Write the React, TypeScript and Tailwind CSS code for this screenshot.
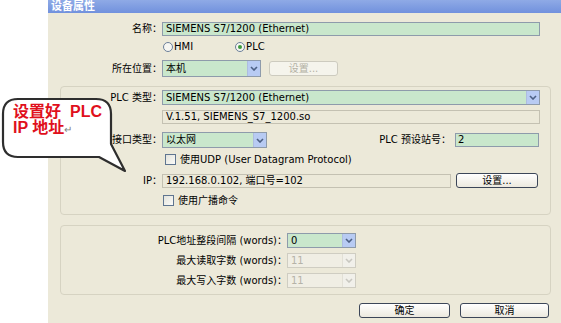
import React from 'react';

const font = { fontFamily: '"DejaVu Sans", "Noto Sans CJK SC", sans-serif' };

const Chevron: React.FC<{ disabled?: boolean }> = ({ disabled }) => (
  <svg width="8" height="5" viewBox="0 0 8 5">
    <path
      d="M1 1 L4 4 L7 1"
      fill="none"
      stroke={disabled ? '#c8c7c0' : '#4d6185'}
      strokeWidth="1.6"
    />
  </svg>
);

interface SelectProps {
  value: string;
  width: string;
  height?: string;
  disabled?: boolean;
}

const Select: React.FC<SelectProps> = ({ value, width, height = 'h-[15px]', disabled }) => (
  <div
    className={`flex ${width} ${height} border ${
      disabled ? 'border-[#cfcdc2] bg-[#f0eee4]' : 'border-[#8e9bab] bg-[#c9e7cc]'
    }`}
  >
    <div
      className={`flex-1 pl-[3px] text-[10px] leading-none flex items-center ${
        disabled ? 'text-[#b5b3a8]' : 'text-black'
      }`}
    >
      {value}
    </div>
    <div
      className={`w-[13px] flex items-center justify-center ${
        disabled ? 'bg-[#f1f0ea] border-l border-[#e2e0d6]' : 'bg-[#b8cbf3] border-l border-[#aebde0]'
      }`}
    >
      <Chevron disabled={disabled} />
    </div>
  </div>
);

const Button: React.FC<{ label: string; width: string; disabled?: boolean }> = ({ label, width, disabled }) => (
  <div
    className={`${width} h-[15px] rounded-[3px] border flex items-center justify-center text-[10px] leading-none ${
      disabled
        ? 'border-[#cdcbbf] bg-[#f5f4ec] text-[#b3b1a4]'
        : 'border-[#3c4658] bg-gradient-to-b from-[#ffffff] to-[#ece9de] text-black'
    }`}
  >
    {label}
  </div>
);

const Checkbox: React.FC<{ label: string; className?: string }> = ({ label, className = '' }) => (
  <div className={`flex items-center h-[11px] ${className}`}>
    <div className="w-[11px] h-[11px] border border-[#5f7590] bg-gradient-to-br from-[#e3e3dc] to-[#fbfbf8]" />
    <span className="ml-[4px] text-[10px] leading-none">{label}</span>
  </div>
);

const Radio: React.FC<{ label: string; checked?: boolean; className?: string }> = ({ label, checked, className = '' }) => (
  <div className={`flex items-center ${className}`}>
    <div className="w-[10px] h-[10px] rounded-full border border-[#6b7f99] bg-[#f6f6f2] flex items-center justify-center">
      {checked && <div className="w-[4px] h-[4px] rounded-full bg-[#3d9a3d]" />}
    </div>
    <span className="ml-[1px] text-[10px] leading-none">{label}</span>
  </div>
);

// speech bubble over the left edge of the dialog
const Callout: React.FC = () => (
  <div className="absolute left-0 top-[96px] w-[130px] h-[80px]">
    <svg width="130" height="80" viewBox="0 0 130 80" className="absolute left-0 top-0">
      <path
        d="M18 3 H96 Q111 3 111 18 V48 L125 75 L99 61 H18 Q3 61 3 46 V18 Q3 3 18 3 Z"
        fill="#ffffff"
        stroke="#2e2e2e"
        strokeWidth="2.2"
        strokeLinejoin="round"
      />
    </svg>
    <div
      className="absolute left-[13px] top-[8px] text-[16px] leading-[16px] font-bold text-[#e0101c]"
      style={{ fontFamily: '"Liberation Sans", "Noto Sans CJK SC", sans-serif' }}
    >
      <div className="h-[16px]">
        设置好<span className="ml-[9px]">PLC</span>
      </div>
      <div className="h-[16px]">
        IP 地址<span className="text-[10px] font-normal text-[#808080]">↵</span>
      </div>
    </div>
  </div>
);

export default function App() {
  return (
    <div className="relative w-[561px] h-[323px] bg-white flex overflow-hidden" style={font}>
      <div className="w-[48px] shrink-0" />
      <div className="flex-1 flex flex-col bg-[#ece9d9] text-black">
        <div className="h-[13px] bg-gradient-to-b from-[#8faae6] to-[#7191dd] flex items-center pl-[3px]">
          <span className="text-[11px] leading-none font-bold text-white">设备属性</span>
        </div>

        <div className="flex items-center mt-[9px] h-[14px]">
          <div className="w-[114px] text-right text-[10px] leading-none">名称：</div>
          <div className="w-[378px] h-[14px] border border-[#8e9bab] bg-[#c9e7cc] pl-[3px] text-[10px] leading-none flex items-center">
            SIEMENS S7/1200 (Ethernet)
          </div>
        </div>

        <div className="flex items-center mt-[5px] h-[11px] pl-[115px]">
          <Radio label="HMI" />
          <Radio label="PLC" checked className="ml-[42px]" />
        </div>

        <div className="flex items-center mt-[8px] h-[17px]">
          <div className="w-[114px] text-right text-[10px] leading-none">所在位置：</div>
          <Select value="本机" width="w-[99px]" height="h-[17px]" />
          <div className="ml-[8px]">
            <Button label="设置..." width="w-[69px]" disabled />
          </div>
        </div>

        <div className="mt-[9px] ml-[12px] mr-[10px] h-[129px] border border-[#d6d3c2] rounded-[4px] flex flex-col">
          <div className="flex items-center mt-[3px] h-[15px]">
            <div className="w-[101px] text-right text-[10px] leading-none">PLC 类型：</div>
            <Select value="SIEMENS S7/1200 (Ethernet)" width="w-[378px]" />
          </div>
          <div className="flex items-center mt-[5px] h-[14px]">
            <div className="w-[101px]" />
            <div className="w-[378px] h-[14px] border border-[#c4c1b2] pl-[3px] text-[10px] leading-none flex items-center">
              V.1.51, SIEMENS_S7_1200.so
            </div>
          </div>
          <div className="flex items-center mt-[8px] h-[16px]">
            <div className="w-[101px] text-right text-[10px] leading-none">接口类型：</div>
            <Select value="以太网" width="w-[105px]" height="h-[16px]" />
            <div className="flex-1 text-right text-[10px] leading-none">PLC 预设站号：</div>
            <div className="ml-[4px] mr-[11px] w-[84px] h-[14px] border border-[#8e9bab] bg-[#c9e7cc] pl-[2px] text-[10px] leading-none flex items-center">
              2
            </div>
          </div>
          <Checkbox label="使用UDP (User Datagram Protocol)" className="mt-[6px] ml-[104px]" />
          <div className="flex items-center mt-[8px] h-[15px]">
            <div className="w-[101px] text-right text-[10px] leading-none">IP：</div>
            <div className="w-[289px] h-[14px] border border-[#c4c1b2] pl-[3px] text-[10px] leading-none flex items-center">
              192.168.0.102, 端口号=102
            </div>
            <div className="ml-[5px]">
              <Button label="设置..." width="w-[82px]" />
            </div>
          </div>
          <Checkbox label="使用广播命令" className="mt-[7px] ml-[102px]" />
        </div>

        <div className="mt-[10px] ml-[12px] mr-[10px] h-[70px] border border-[#d6d3c2] rounded-[4px] flex flex-col">
          {[
            { label: 'PLC地址整段间隔 (words)：', value: '0', disabled: false, mt: 'mt-[7px]' },
            { label: '最大读取字数 (words)：', value: '11', disabled: true, mt: 'mt-[5px]' },
            { label: '最大写入字数 (words)：', value: '11', disabled: true, mt: 'mt-[5px]' },
          ].map((row) => (
            <div key={row.label} className={`flex items-center h-[15px] ${row.mt}`}>
              <div className="w-[226px] text-right text-[10px] leading-none">{row.label}</div>
              <Select value={row.value} width="w-[69px]" disabled={row.disabled} />
            </div>
          ))}
        </div>

        <div className="flex justify-end mt-[8px] mr-[12px] gap-[10px]">
          <Button label="确定" width="w-[91px]" />
          <Button label="取消" width="w-[89px]" />
        </div>
      </div>
      <Callout />
    </div>
  );
}
